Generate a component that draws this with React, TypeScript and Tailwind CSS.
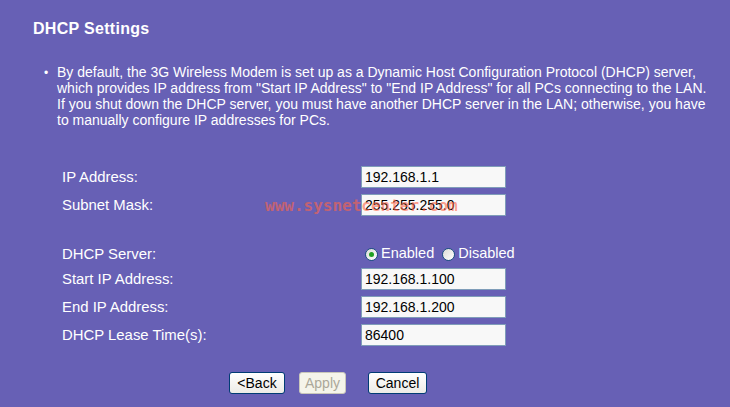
import React from 'react';

const rows = [
  { label: 'IP Address:', value: '192.168.1.1' },
  { label: 'Subnet Mask:', value: '255.255.255.0' },
];

const dhcpRows = [
  { label: 'Start IP Address:', value: '192.168.1.100' },
  { label: 'End IP Address:', value: '192.168.1.200' },
  { label: 'DHCP Lease Time(s):', value: '86400' },
];

const Field = ({ label, value }: { label: string; value: string }) => (
  <div className="flex items-center h-[22px] mb-[6px]">
    <div className="w-[299px] text-[14.9px] text-white">{label}</div>
    <input
      readOnly
      value={value}
      className="w-[145px] h-[22px] bg-[#f8f8f8] border border-[#7f9db9] px-[3px] text-[14px] text-black outline-none"
    />
  </div>
);

const Radio = ({ checked }: { checked?: boolean }) => (
  <span className="inline-flex items-center justify-center w-[13px] h-[13px] rounded-full border border-[#1c5180] bg-gradient-to-br from-[#dcdcd6] to-white">
    {checked && <span className="w-[5px] h-[5px] rounded-full bg-[#21a121]" />}
  </span>
);

export default function App() {
  return (
    <div
      className="relative w-[730px] h-[407px] bg-[#6760b5] text-white overflow-hidden"
      style={{ fontFamily: '"Liberation Sans", Arial, sans-serif' }}
    >
      <h1 className="absolute left-[33px] top-[17px] text-[16px] font-bold tracking-[0.3px]">DHCP Settings</h1>

      <div className="pt-[64px] pl-[44px] pr-[10px]">
        <div className="flex text-[14px] leading-[16px]">
          <span className="w-[13px] shrink-0 text-[12px] pt-[1px]">•</span>
          <p className="whitespace-nowrap">
            By default, the 3G Wireless Modem is set up as a Dynamic Host Configuration Protocol (DHCP) server,
            <br />
            which provides IP address from "Start IP Address" to "End IP Address" for all PCs connecting to the LAN.
            <br />
            If you shut down the DHCP server, you must have another DHCP server in the LAN; otherwise, you have
            <br />
            to manually configure IP addresses for PCs.
          </p>
        </div>
      </div>

      <div className="pl-[62px] pt-[38px]">
        {rows.map((r) => (
          <Field key={r.label} {...r} />
        ))}
        <div className="h-[21px]" />
        <div className="flex items-center h-[22px] mb-[3px]">
          <div className="w-[303px] text-[14.9px]">DHCP Server:</div>
          <label className="flex items-center gap-[3px] text-[14.5px]">
            <Radio checked />
            Enabled
          </label>
          <label className="flex items-center gap-[3px] text-[14.5px] ml-[8px]">
            <Radio />
            Disabled
          </label>
        </div>
        {dhcpRows.map((r) => (
          <Field key={r.label} {...r} />
        ))}
      </div>

      <div className="flex pl-[229px] pt-[20px] gap-[14px]">
        <button className="w-[56px] h-[22px] rounded-[3px] border border-[#003c74] bg-gradient-to-b from-white to-[#ecebe6] text-[14px] text-black">
          &lt;Back
        </button>
        <button className="w-[47px] h-[22px] rounded-[3px] border border-[#c9c7ba] bg-[#f5f4ea] text-[14px] text-[#aca899]">
          Apply
        </button>
        <button className="ml-[8px] w-[59px] h-[22px] rounded-[3px] border border-[#003c74] bg-gradient-to-b from-white to-[#ecebe6] text-[14px] text-black">
          Cancel
        </button>
      </div>

      <div
        className="absolute left-[265px] top-[194px] text-[16px] font-bold text-[rgba(255,100,70,0.6)] pointer-events-none"
        style={{ fontFamily: '"DejaVu Sans Mono", monospace' }}
      >
        www.sysnetcenter.com
      </div>
    </div>
  );
}
